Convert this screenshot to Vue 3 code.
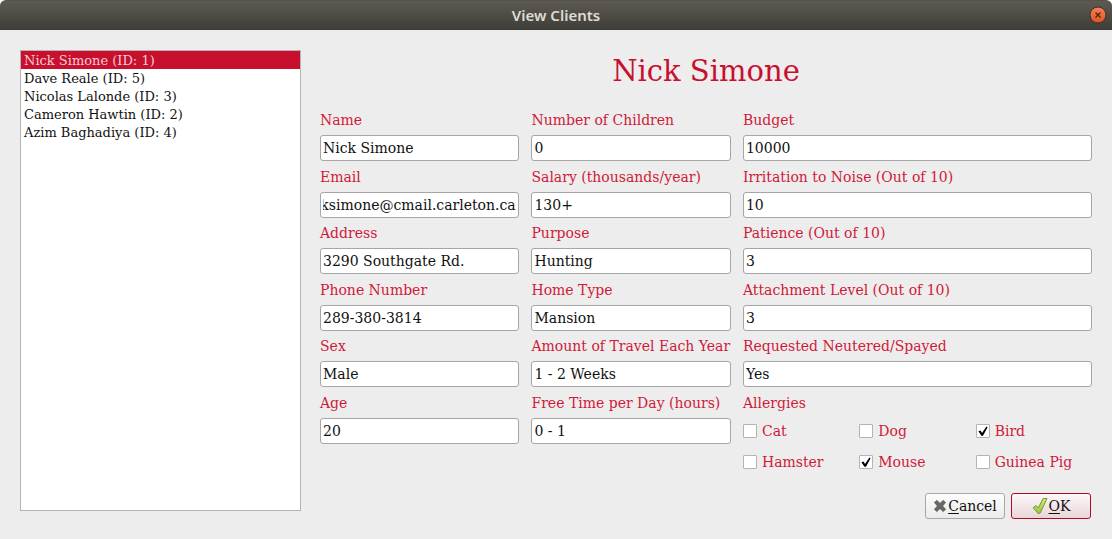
<script setup>
import { onMounted, ref } from 'vue'

const clients = ref([
  { id: 1, name: 'Nick Simone' },
  { id: 5, name: 'Dave Reale' },
  { id: 3, name: 'Nicolas Lalonde' },
  { id: 2, name: 'Cameron Hawtin' },
  { id: 4, name: 'Azim Baghadiya' },
])
const selected = ref(1)

const fields = ref([
  { key: 'name', label: 'Name', value: 'Nick Simone' },
  { key: 'children', label: 'Number of Children', value: '0' },
  { key: 'budget', label: 'Budget', value: '10000' },
  { key: 'email', label: 'Email', value: 'nicksimone@cmail.carleton.ca' },
  { key: 'salary', label: 'Salary (thousands/year)', value: '130+' },
  { key: 'noise', label: 'Irritation to Noise (Out of 10)', value: '10' },
  { key: 'address', label: 'Address', value: '3290 Southgate Rd.' },
  { key: 'purpose', label: 'Purpose', value: 'Hunting' },
  { key: 'patience', label: 'Patience (Out of 10)', value: '3' },
  { key: 'phone', label: 'Phone Number', value: '289-380-3814' },
  { key: 'home', label: 'Home Type', value: 'Mansion' },
  { key: 'attachment', label: 'Attachment Level (Out of 10)', value: '3' },
  { key: 'sex', label: 'Sex', value: 'Male' },
  { key: 'travel', label: 'Amount of Travel Each Year', value: '1 - 2 Weeks' },
  { key: 'neutered', label: 'Requested Neutered/Spayed', value: 'Yes' },
  { key: 'age', label: 'Age', value: '20' },
  { key: 'free', label: 'Free Time per Day (hours)', value: '0 - 1' },
])

const allergies = ref([
  { name: 'Cat', on: false },
  { name: 'Dog', on: false },
  { name: 'Bird', on: true },
  { name: 'Hamster', on: false },
  { name: 'Mouse', on: true },
  { name: 'Guinea Pig', on: false },
])

const form = ref(null)

onMounted(() => {
  form.value.querySelectorAll('.box').forEach((el) => {
    el.scrollLeft = el.scrollWidth
  })
})
</script>

<template>
  <div class="window">
    <header class="titlebar">
      <span class="title">View Clients</span>
      <button class="close" type="button" aria-label="Close">
        <svg viewBox="0 0 18 18" width="18" height="18">
          <defs>
            <linearGradient id="closeFill" x1="0" y1="0" x2="0" y2="1">
              <stop offset="0" stop-color="#f58157" />
              <stop offset="1" stop-color="#e6511f" />
            </linearGradient>
          </defs>
          <circle cx="9" cy="9" r="8" fill="url(#closeFill)" stroke="#35332e" />
          <path d="M6.5 6.5 11.5 11.5M11.5 6.5 6.5 11.5" stroke="#4a2312" stroke-width="1.3" fill="none" />
        </svg>
      </button>
    </header>

    <main class="content">
      <ul class="list" role="listbox" aria-label="Clients">
        <li
          v-for="c in clients"
          :key="c.id"
          role="option"
          class="item"
          :class="{ selected: c.id === selected }"
          :aria-selected="c.id === selected"
          @click="selected = c.id"
        >{{ c.name }} (ID: {{ c.id }})</li>
      </ul>

      <section class="details">
        <h1 class="heading">Nick Simone</h1>
        <form ref="form" class="form" @submit.prevent>
          <div v-for="f in fields" :key="f.key" class="field">
            <label class="label" :for="f.key">{{ f.label }}</label>
            <input :id="f.key" v-model="f.value" class="box" type="text" readonly />
          </div>
          <div class="allergies" role="group" aria-labelledby="allergies">
            <span id="allergies" class="label">Allergies</span>
            <div class="checks">
              <label v-for="a in allergies" :key="a.name" class="check">
                <span class="tick">
                  <input v-model="a.on" class="tickbox" type="checkbox" />
                  <svg v-if="a.on" class="mark" viewBox="0 0 14 14" width="14" height="14">
                    <path d="M2.4 7.2 4.6 6.4 6 9 10.4 2.4 11.6 3.2 7 11.8 5.4 11.8Z" fill="#000" />
                  </svg>
                </span>
                {{ a.name }}
              </label>
            </div>
          </div>
        </form>

        <footer class="actions">
          <button class="btn" type="button">
            <svg viewBox="0 0 14 14" width="14" height="14">
              <path
                d="M1.5 3.6 3.8 1.4 7 4.4 10.2 1.4 12.5 3.6 9.5 7 12.5 10.2 10.2 12.6 7 9.5 3.8 12.6 1.5 10.2 4.5 7Z"
                fill="#666864" stroke="#50524f" stroke-width=".8" stroke-linejoin="round"
              />
            </svg>
            <span><u>C</u>ancel</span>
          </button>
          <button class="btn primary" type="button">
            <svg viewBox="0 0 16 18" width="16" height="18">
              <defs>
                <linearGradient id="okFill" x1="0" y1="0" x2="0" y2="1">
                  <stop offset="0" stop-color="#d6ec7d" />
                  <stop offset="1" stop-color="#9cc53a" />
                </linearGradient>
              </defs>
              <path
                d="M1.2 10.6 4.2 8.6 6.4 11 11 1.6 15 1.4 8.2 16 6.2 16.6Z"
                fill="url(#okFill)" stroke="#6f9a2a" stroke-linejoin="round"
              />
            </svg>
            <span><u>O</u>K</span>
          </button>
        </footer>
      </section>
    </main>
  </div>
</template>

<style>
body {
  background: #ededed;
}
</style>

<style scoped>
.window {
  min-height: 100vh;
  display: flex;
  flex-direction: column;
  box-sizing: border-box;
  background: #ededed;
  color: #111;
  font: 14px/18px "DejaVu Serif", serif;
}
.titlebar {
  position: relative;
  height: 30px;
  display: flex;
  align-items: center;
  justify-content: center;
  box-sizing: border-box;
  padding-bottom: 2px;
  border-top: 1px solid #55524a;
  border-radius: 6px 6px 0 0;
  background: linear-gradient(#5d5a52, #3e3d37);
  box-shadow: 0 -6px 0 6px #fff;
  clip-path: inset(0);
}
.title {
  color: #dfdbd2;
  font: 600 15px/20px "Noto Sans", "Open Sans", sans-serif;
}
.close {
  position: absolute;
  right: 5px;
  top: 5px;
  width: 18px;
  height: 18px;
  padding: 0;
  border: 0;
  background: none;
}
.close svg {
  display: block;
}
.content {
  flex: 1;
  display: flex;
  gap: 19px;
  padding: 20px;
}
.list {
  width: 281px;
  flex: none;
  box-sizing: border-box;
  margin: 0 0 8px;
  padding: 0;
  list-style: none;
  border: 1px solid #b4b4b4;
  background: #fff;
  font-size: 13px;
}
.item {
  height: 18px;
  box-sizing: border-box;
  padding: 1px 3px 0;
}
.item.selected {
  background: #c8102e;
  color: #f3ccd3;
}
.details {
  flex: 1;
  min-width: 0;
  display: flex;
  flex-direction: column;
}
.heading {
  margin: 0 0 18px;
  text-align: center;
  color: #c8102e;
  font: 400 29px/42px "DejaVu Serif", serif;
}
.form {
  flex: 1;
  display: grid;
  grid-template-columns: 4fr 4fr 7fr;
  grid-template-rows: repeat(6, 1fr) 44px;
  column-gap: 12px;
}
.field {
  min-width: 0;
}
.label {
  display: block;
  margin: 1px 0 6px;
  white-space: nowrap;
  color: #d01a39;
}
.box {
  display: block;
  width: 100%;
  height: 26px;
  box-sizing: border-box;
  padding: 0 2px;
  border: 1px solid #a6a6a6;
  border-radius: 3px;
  background: #fff;
  color: #111;
  font: inherit;
  outline: none;
}
.allergies {
  grid-row: 6 / 8;
  grid-column: 3;
}
.checks {
  display: grid;
  grid-template-columns: repeat(3, 1fr);
  row-gap: 13px;
  padding-top: 4px;
}
.check {
  display: flex;
  align-items: center;
  gap: 5px;
  color: #d01a39;
  white-space: nowrap;
}
.tick {
  position: relative;
  width: 14px;
  height: 14px;
}
.tickbox {
  appearance: none;
  display: block;
  width: 14px;
  height: 14px;
  margin: 0;
  border: 1px solid #b4b4b4;
  border-radius: 1px;
  background: #fff;
}
.mark {
  position: absolute;
  inset: 0;
  pointer-events: none;
}
.actions {
  display: flex;
  justify-content: flex-end;
  gap: 6px;
  padding-right: 1px;
}
.btn {
  width: 80px;
  height: 26px;
  display: flex;
  align-items: center;
  justify-content: center;
  gap: 1px;
  padding: 0;
  border: 1px solid #a8a8a8;
  border-radius: 3px;
  background: linear-gradient(#fdfdfd, #ebebe9);
  color: #111;
  font: inherit;
}
.btn.primary {
  border-color: #a80e28;
  background: linear-gradient(#fdf8f8, #e9d5d8);
}
.btn u {
  text-underline-offset: 2px;
}
</style>
